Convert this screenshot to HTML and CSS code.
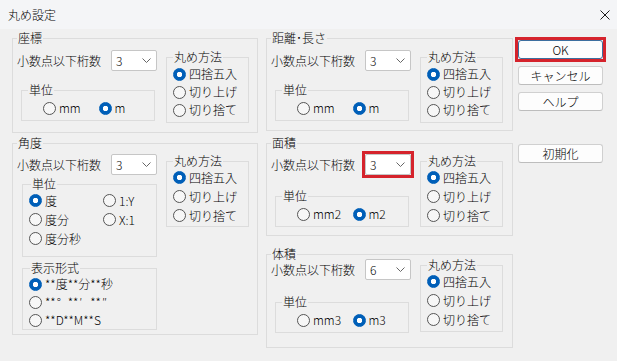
FILE: index.html
```html
<!DOCTYPE html>
<html lang="ja">
<head>
    <meta charset="UTF-8">
    <meta name="viewport" content="width=device-width, initial-scale=1.0">
    <title>丸め設定</title>
    <link rel="stylesheet" href="styles.css">
</head>
<body>
    <div class="dialog">
        <!-- タイトルバー -->
        <div class="title-bar">
            <span class="title">丸め設定</span>
            <button class="close" type="button" title="閉じる">
                <svg width="10" height="10" viewBox="0 0 10 10"><path d="M0.5 0.5L9.5 9.5M9.5 0.5L0.5 9.5"/></svg>
            </button>
        </div>

        <div class="main">
            <!-- 左の列 -->
            <div class="column column-left">
                <fieldset class="group group-coord">
                    <legend>座標</legend>
                    <div class="group-body">
                        <div class="col">
                            <div class="digits">
                                <span>小数点以下桁数</span>
                                <div class="combo"><span>3</span><svg width="9" height="5" viewBox="0 0 9 5"><polyline points="0.5,0.5 4.5,4.5 8.5,0.5"/></svg></div>
                            </div>
                            <fieldset class="sub unit">
                                <legend>単位</legend>
                                <div class="radio-row">
                                    <label class="radio"><input type="radio" name="coord-unit">mm</label>
                                    <label class="radio"><input type="radio" name="coord-unit" checked>m</label>
                                </div>
                            </fieldset>
                        </div>
                        <fieldset class="sub rounding">
                            <legend>丸め方法</legend>
                            <label class="radio"><input type="radio" name="coord-round" checked>四捨五入</label>
                            <label class="radio"><input type="radio" name="coord-round">切り上げ</label>
                            <label class="radio"><input type="radio" name="coord-round">切り捨て</label>
                        </fieldset>
                    </div>
                </fieldset>

                <fieldset class="group group-angle">
                    <legend>角度</legend>
                    <div class="group-body">
                        <div class="col">
                            <div class="digits">
                                <span>小数点以下桁数</span>
                                <div class="combo"><span>3</span><svg width="9" height="5" viewBox="0 0 9 5"><polyline points="0.5,0.5 4.5,4.5 8.5,0.5"/></svg></div>
                            </div>
                            <fieldset class="sub angle-unit">
                                <legend>単位</legend>
                                <div class="angle-grid">
                                    <label class="radio"><input type="radio" name="angle-unit" checked>度</label>
                                    <label class="radio"><input type="radio" name="angle-unit">度分</label>
                                    <label class="radio"><input type="radio" name="angle-unit">度分秒</label>
                                    <label class="radio"><input type="radio" name="angle-unit">1:Y</label>
                                    <label class="radio"><input type="radio" name="angle-unit">X:1</label>
                                </div>
                            </fieldset>
                            <fieldset class="sub format">
                                <legend>表示形式</legend>
                                <label class="radio"><input type="radio" name="angle-format" checked>**度**分**秒</label>
                                <label class="radio"><input type="radio" name="angle-format"><span>**<span class="sym">°</span>**<span class="sym">′</span>**<span class="sym">″</span></span></label>
                                <label class="radio"><input type="radio" name="angle-format">**D**M**S</label>
                            </fieldset>
                        </div>
                        <fieldset class="sub rounding rounding-wide">
                            <legend>丸め方法</legend>
                            <label class="radio"><input type="radio" name="angle-round" checked>四捨五入</label>
                            <label class="radio"><input type="radio" name="angle-round">切り上げ</label>
                            <label class="radio"><input type="radio" name="angle-round">切り捨て</label>
                        </fieldset>
                    </div>
                </fieldset>
            </div>

            <!-- 右の列 -->
            <div class="column column-right">
                <fieldset class="group group-dist">
                    <legend>距離･長さ</legend>
                    <div class="group-body">
                        <div class="col">
                            <div class="digits">
                                <span>小数点以下桁数</span>
                                <div class="combo"><span>3</span><svg width="9" height="5" viewBox="0 0 9 5"><polyline points="0.5,0.5 4.5,4.5 8.5,0.5"/></svg></div>
                            </div>
                            <fieldset class="sub unit">
                                <legend>単位</legend>
                                <div class="radio-row">
                                    <label class="radio"><input type="radio" name="dist-unit">mm</label>
                                    <label class="radio"><input type="radio" name="dist-unit" checked>m</label>
                                </div>
                            </fieldset>
                        </div>
                        <fieldset class="sub rounding">
                            <legend>丸め方法</legend>
                            <label class="radio"><input type="radio" name="dist-round" checked>四捨五入</label>
                            <label class="radio"><input type="radio" name="dist-round">切り上げ</label>
                            <label class="radio"><input type="radio" name="dist-round">切り捨て</label>
                        </fieldset>
                    </div>
                </fieldset>

                <fieldset class="group group-area">
                    <legend>面積</legend>
                    <div class="group-body">
                        <div class="col">
                            <div class="digits">
                                <span>小数点以下桁数</span>
                                <div class="combo marked"><span>3</span><svg width="9" height="5" viewBox="0 0 9 5"><polyline points="0.5,0.5 4.5,4.5 8.5,0.5"/></svg></div>
                            </div>
                            <fieldset class="sub unit">
                                <legend>単位</legend>
                                <div class="radio-row">
                                    <label class="radio"><input type="radio" name="area-unit">mm2</label>
                                    <label class="radio"><input type="radio" name="area-unit" checked>m2</label>
                                </div>
                            </fieldset>
                        </div>
                        <fieldset class="sub rounding rounding-wide">
                            <legend>丸め方法</legend>
                            <label class="radio"><input type="radio" name="area-round" checked>四捨五入</label>
                            <label class="radio"><input type="radio" name="area-round">切り上げ</label>
                            <label class="radio"><input type="radio" name="area-round">切り捨て</label>
                        </fieldset>
                    </div>
                </fieldset>

                <fieldset class="group group-vol">
                    <legend>体積</legend>
                    <div class="group-body">
                        <div class="col">
                            <div class="digits">
                                <span>小数点以下桁数</span>
                                <div class="combo"><span>6</span><svg width="9" height="5" viewBox="0 0 9 5"><polyline points="0.5,0.5 4.5,4.5 8.5,0.5"/></svg></div>
                            </div>
                            <fieldset class="sub unit">
                                <legend>単位</legend>
                                <div class="radio-row">
                                    <label class="radio"><input type="radio" name="vol-unit">mm3</label>
                                    <label class="radio"><input type="radio" name="vol-unit" checked>m3</label>
                                </div>
                            </fieldset>
                        </div>
                        <fieldset class="sub rounding rounding-wide">
                            <legend>丸め方法</legend>
                            <label class="radio"><input type="radio" name="vol-round" checked>四捨五入</label>
                            <label class="radio"><input type="radio" name="vol-round">切り上げ</label>
                            <label class="radio"><input type="radio" name="vol-round">切り捨て</label>
                        </fieldset>
                    </div>
                </fieldset>
            </div>

            <!-- ボタン -->
            <div class="buttons">
                <button class="btn btn-default marked" type="button">OK</button>
                <button class="btn" type="button">キャンセル</button>
                <button class="btn" type="button">ヘルプ</button>
                <button class="btn btn-reset" type="button">初期化</button>
            </div>
        </div>
    </div>
</body>
</html>
```

FILE: styles.css
```css
* {
    box-sizing: border-box;
}

html, body {
    margin: 0;
    padding: 0;
}

body {
    width: 617px;
    height: 361px;
    overflow: hidden;
    background-color: #f0f0f0;
    font-family: "Noto Sans CJK JP", "Noto Sans", sans-serif;
    font-size: 12px;
    font-weight: 300;
    line-height: 18px;
    color: #000;
}

/* Title bar */
.title-bar {
    height: 29px;
    display: flex;
    justify-content: space-between;
    align-items: center;
    padding: 0 7px 0 8px;
    background-color: #f4f5f7;
}

.title {
    line-height: 14px;
}

.close {
    display: block;
    width: 10px;
    height: 10px;
    padding: 0;
    border: none;
    background: none;
}

.close svg {
    display: block;
    stroke: #1b1b1b;
    stroke-width: 1;
}

/* Layout */
.main {
    display: flex;
    padding: 2px 0 0 12px;
}

.column {
    display: flex;
    flex-direction: column;
}

.column-left {
    width: 246px;
}

.column-right {
    width: 247px;
    margin-left: 8px;
}

/* Group boxes */
fieldset {
    margin: 0;
    min-width: 0;
    border: 1px solid #dcdcdc;
}

legend {
    padding: 0 1px;
    font-size: 12px;
    line-height: 14px;
}

.group {
    padding: 5px 8px 0 4px;
}

.group-coord {
    height: 102px;
}

.group-angle {
    height: 199px;
    margin-top: 3px;
    padding-top: 4px;
}

.group-dist {
    height: 100px;
}

.group-area {
    height: 100px;
    margin-top: 5px;
    padding-top: 4px;
}

.group-vol {
    height: 101px;
    margin-top: 11px;
    padding-top: 0;
}

.group-body {
    display: flex;
    align-items: flex-start;
    gap: 9px;
}

.col {
    width: 140px;
    display: flex;
    flex-direction: column;
}

.digits {
    height: 21px;
    display: flex;
    justify-content: space-between;
    align-items: center;
}

.group-vol .digits {
    margin-top: -2px;
}

/* Combo box */
.combo {
    width: 46px;
    height: 21px;
    display: flex;
    justify-content: space-between;
    align-items: center;
    padding: 0 5px 0 4px;
    border: 1px solid #c6c6c6;
    border-radius: 2px;
    background-color: #fff;
    line-height: 19px;
}

.combo svg {
    display: block;
    fill: none;
    stroke: #666;
    stroke-width: 1;
}

/* 赤枠の強調 */
.marked {
    position: relative;
}

.marked::after {
    content: "";
    position: absolute;
    top: -4px;
    left: -4px;
    right: -4px;
    bottom: -4px;
    border: 3px solid #d5232c;
    pointer-events: none;
}

/* Sub groups */
.sub {
    padding: 0 0 0 6px;
}

.unit {
    width: 134px;
    height: 38px;
    margin: 12px 0 0 4px;
    padding-top: 2px;
}

.group-area .unit {
    margin-top: 14px;
}

.group-vol .unit {
    margin-top: 15px;
}

.radio-row {
    display: flex;
    margin-left: 15px;
}

.radio-row .radio {
    width: 56px;
}

.rounding {
    width: 83px;
    height: 73px;
    padding-top: 1px;
}

.rounding-wide {
    padding-top: 0;
}

.rounding-wide .radio {
    height: 19px;
}

.group-vol .rounding {
    height: 74px;
    margin-top: -3px;
}

.angle-unit {
    width: 135px;
    height: 80px;
    margin: 2px 0 0 5px;
}

.angle-unit legend {
    margin-left: 2px;
}

.angle-grid {
    display: grid;
    grid-template-columns: 74px auto;
    grid-template-rows: repeat(3, 19px);
    grid-auto-flow: column;
}

.angle-grid .radio {
    height: 19px;
}

.format {
    width: 135px;
    height: 69px;
    margin: 4px 0 0 5px;
}

.format legend {
    margin-left: 1px;
}

.sym {
    display: inline-block;
    width: 12px;
    padding-left: 1px;
}

/* Radio buttons */
.radio {
    height: 18px;
    display: flex;
    align-items: center;
    gap: 3px;
    white-space: nowrap;
}

.radio input {
    appearance: none;
    -webkit-appearance: none;
    flex: none;
    width: 13px;
    height: 13px;
    margin: 0;
    border: 1px solid #555;
    border-radius: 50%;
    background-color: #f7f7f7;
}

.radio input:checked {
    border-color: #005fb8;
    background: radial-gradient(circle, #fff 0 2.4px, #005fb8 3px);
}

/* Buttons */
.buttons {
    width: 85px;
    margin-left: 5px;
    padding-top: 9px;
    display: flex;
    flex-direction: column;
    gap: 7px;
}

.btn {
    height: 19px;
    padding: 0;
    border: 1px solid #d0d0d0;
    border-bottom-color: #bdbdbd;
    border-radius: 3px;
    background-color: #fdfdfd;
    font: inherit;
    line-height: 17px;
    color: #000;
}

.btn-default {
    border-color: #3d6f9f;
}

.btn-reset {
    margin-top: 26px;
}
```
